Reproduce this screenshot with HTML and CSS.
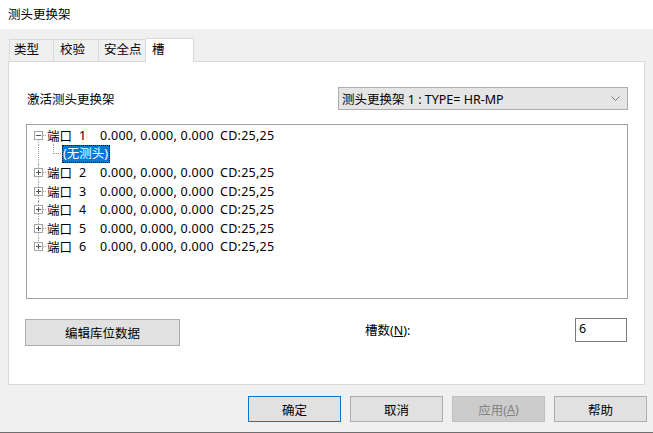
FILE: index.html
```html
<!DOCTYPE html>
<html lang="zh">
<head>
<meta charset="utf-8">
<title>测头更换架</title>
<link rel="stylesheet" href="styles.css">
</head>
<body>
<div class="window">
  <div class="titlebar">测头更换架</div>
  <div class="tabs">
    <div class="tab t1">类型</div>
    <div class="tab t2">校验</div>
    <div class="tab t3">安全点</div>
    <div class="tab t4 active">槽</div>
  </div>
  <div class="panel">
    <div class="row-top">
      <span class="lbl">激活测头更换架</span>
      <div class="combo">
        <span>测头更换架 1 : TYPE= HR-MP</span>
        <svg class="chev" width="9" height="5" viewBox="0 0 9 5"><polyline points="0.5,0.5 4.5,4.5 8.5,0.5" fill="none" stroke="#7a7a7a" stroke-width="1"/></svg>
      </div>
    </div>
    <div class="tree">
      <div class="node first">
        <svg class="exp" width="13" height="9" viewBox="0 0 13 9"><rect x="0.5" y="0.5" width="8" height="8" fill="#fff" stroke="#a5a5a5"/><line x1="2" y1="4.5" x2="7" y2="4.5" stroke="#555"/><line x1="9" y1="4.5" x2="13" y2="4.5" stroke="#a0a0a0" stroke-dasharray="1 1"/></svg>
        <span class="port">端口</span><span class="idx">1</span><span class="xyz">0.000, 0.000, 0.000</span><span class="cd">CD:25,25</span>
      </div>
      <div class="node child">
        <span class="sel">(无测头)</span>
      </div>
      <div class="node">
        <svg class="exp" width="13" height="9" viewBox="0 0 13 9"><rect x="0.5" y="0.5" width="8" height="8" fill="#fff" stroke="#a5a5a5"/><line x1="2" y1="4.5" x2="7" y2="4.5" stroke="#555"/><line x1="4.5" y1="2" x2="4.5" y2="7" stroke="#555"/><line x1="9" y1="4.5" x2="13" y2="4.5" stroke="#a0a0a0" stroke-dasharray="1 1"/></svg>
        <span class="port">端口</span><span class="idx">2</span><span class="xyz">0.000, 0.000, 0.000</span><span class="cd">CD:25,25</span>
      </div>
      <div class="node">
        <svg class="exp" width="13" height="9" viewBox="0 0 13 9"><rect x="0.5" y="0.5" width="8" height="8" fill="#fff" stroke="#a5a5a5"/><line x1="2" y1="4.5" x2="7" y2="4.5" stroke="#555"/><line x1="4.5" y1="2" x2="4.5" y2="7" stroke="#555"/><line x1="9" y1="4.5" x2="13" y2="4.5" stroke="#a0a0a0" stroke-dasharray="1 1"/></svg>
        <span class="port">端口</span><span class="idx">3</span><span class="xyz">0.000, 0.000, 0.000</span><span class="cd">CD:25,25</span>
      </div>
      <div class="node">
        <svg class="exp" width="13" height="9" viewBox="0 0 13 9"><rect x="0.5" y="0.5" width="8" height="8" fill="#fff" stroke="#a5a5a5"/><line x1="2" y1="4.5" x2="7" y2="4.5" stroke="#555"/><line x1="4.5" y1="2" x2="4.5" y2="7" stroke="#555"/><line x1="9" y1="4.5" x2="13" y2="4.5" stroke="#a0a0a0" stroke-dasharray="1 1"/></svg>
        <span class="port">端口</span><span class="idx">4</span><span class="xyz">0.000, 0.000, 0.000</span><span class="cd">CD:25,25</span>
      </div>
      <div class="node">
        <svg class="exp" width="13" height="9" viewBox="0 0 13 9"><rect x="0.5" y="0.5" width="8" height="8" fill="#fff" stroke="#a5a5a5"/><line x1="2" y1="4.5" x2="7" y2="4.5" stroke="#555"/><line x1="4.5" y1="2" x2="4.5" y2="7" stroke="#555"/><line x1="9" y1="4.5" x2="13" y2="4.5" stroke="#a0a0a0" stroke-dasharray="1 1"/></svg>
        <span class="port">端口</span><span class="idx">5</span><span class="xyz">0.000, 0.000, 0.000</span><span class="cd">CD:25,25</span>
      </div>
      <div class="node last">
        <svg class="exp" width="13" height="9" viewBox="0 0 13 9"><rect x="0.5" y="0.5" width="8" height="8" fill="#fff" stroke="#a5a5a5"/><line x1="2" y1="4.5" x2="7" y2="4.5" stroke="#555"/><line x1="4.5" y1="2" x2="4.5" y2="7" stroke="#555"/><line x1="9" y1="4.5" x2="13" y2="4.5" stroke="#a0a0a0" stroke-dasharray="1 1"/></svg>
        <span class="port">端口</span><span class="idx">6</span><span class="xyz">0.000, 0.000, 0.000</span><span class="cd">CD:25,25</span>
      </div>
    </div>
    <div class="row-bottom">
      <div class="btn edit">编辑库位数据</div>
      <span class="count-lbl">槽数(<u>N</u>):</span>
      <div class="input">6</div>
    </div>
  </div>
  <div class="buttons">
    <div class="btn dlg default">确定</div>
    <div class="btn dlg">取消</div>
    <div class="btn dlg disabled">应用(<u>A</u>)</div>
    <div class="btn dlg">帮助</div>
  </div>
</div>
</body>
</html>
```
FILE: styles.css
```css
html, body {
  margin: 0;
  padding: 0;
}
body {
  width: 653px;
  height: 433px;
  overflow: hidden;
  background: #f0f0f0;
  font-family: "Noto Sans", "Noto Sans CJK SC", sans-serif;
  font-size: 12.5px;
  color: #000;
}
.window {
  height: 432px;
  border-bottom: 1px solid #6e6e6e;
  display: flex;
  flex-direction: column;
}
.titlebar {
  height: 29px;
  line-height: 30px;
  padding-left: 8px;
  background: #fff;
}
.tabs {
  display: flex;
  margin-top: 10px;
  padding-left: 9px;
  height: 22px;
  align-items: flex-end;
  position: relative;
  z-index: 2;
}
.tab {
  box-sizing: border-box;
  height: 22px;
  line-height: 20px;
  border: 1px solid #d9d9d9;
  border-bottom: none;
  border-right: none;
  padding-left: 4px;
  background: #f0f0f0;
}
.t1 { width: 44px; }
.t2 { width: 45px; padding-left: 6px; }
.t3 { width: 48px; padding-left: 5px; border-right: 1px solid #d9d9d9; }
.t4 { width: 48px; }
.tab.active {
  height: 24px;
  margin-top: -1px;
  margin-bottom: -1px;
  background: #fff;
  border-right: 1px solid #d9d9d9;
  border-left: none;
  padding-left: 6px;
  line-height: 22px;
}
.panel {
  margin-left: 8px;
  width: 637px;
  height: 324px;
  box-sizing: border-box;
  border: 1px solid #d9d9d9;
  background: #fff;
  padding: 0 16px 0 17px;
  display: flex;
  flex-direction: column;
}
.row-top {
  margin-top: 25px;
  height: 23px;
  display: flex;
  align-items: center;
  justify-content: space-between;
}
.lbl {
  padding-left: 1px;
}
.combo {
  width: 290px;
  height: 23px;
  box-sizing: border-box;
  border: 1px solid #adadad;
  background: #e5e5e5;
  display: flex;
  align-items: center;
  justify-content: space-between;
  padding: 0 7px 0 3px;
}
.chev { display: block; }
.tree {
  margin-top: 14px;
  height: 175px;
  box-sizing: border-box;
  border: 1px solid #a0a0a0;
  padding-top: 1.5px;
  background: #fff;
}
.node {
  position: relative;
  height: 18.5px;
  display: flex;
  align-items: center;
  padding-left: 7px;
  white-space: nowrap;
}
.node::before {
  content: "";
  position: absolute;
  left: 11px;
  top: 0;
  bottom: 0;
  border-left: 1px dotted #a0a0a0;
}
.node.first::before { top: 50%; }
.node.last::before { bottom: 50%; }
.exp {
  position: relative;
  z-index: 1;
  display: block;
  flex: none;
}
.port { width: 32px; }
.idx { width: 21px; }
.xyz { width: 120px; letter-spacing: 0.25px; }
.cd { letter-spacing: 0.25px; }
.node.child {
  padding-left: 35px;
}
.node.child::after {
  content: "";
  position: absolute;
  left: 26px;
  top: -1px;
  height: 9px;
  width: 7px;
  border-left: 1px dotted #a0a0a0;
  border-bottom: 1px dotted #a0a0a0;
}
.sel {
  background: #0078d7;
  color: #fff;
  border: 1px dotted #1a1a1a;
  line-height: 16px;
  padding: 0 1px 0 0;
}
.row-bottom {
  margin-top: 19px;
  display: flex;
  align-items: flex-start;
}
.btn {
  box-sizing: border-box;
  border: 1px solid #adadad;
  background: #e1e1e1;
  display: flex;
  align-items: center;
  justify-content: center;
}
.edit {
  margin-left: -1px;
  margin-top: 1px;
  width: 155px;
  height: 27px;
}
.count-lbl {
  margin-left: 185px;
  margin-top: 4px;
  line-height: 18px;
}
.input {
  margin-left: auto;
  margin-right: 1px;
  width: 52px;
  height: 24px;
  box-sizing: border-box;
  border: 1px solid #7a7a7a;
  background: #fff;
  padding: 0 3px;
  line-height: 20px;
}
.buttons {
  margin-top: 11px;
  display: flex;
  justify-content: flex-end;
  gap: 9px;
  padding-right: 6px;
}
.dlg {
  width: 93px;
  height: 26px;
}
.dlg.default {
  border: 1px solid #0078d7;
}
.dlg.disabled {
  background: #cccccc;
  border-color: #bfbfbf;
  color: #838383;
}
```
